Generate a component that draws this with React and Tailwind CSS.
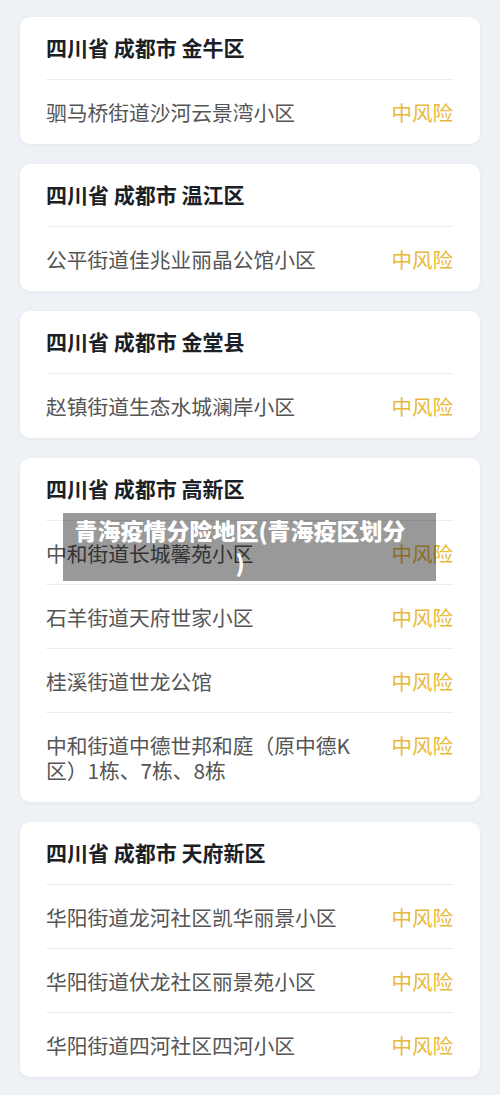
import React from "react";

const groups = [
  { title: "四川省 成都市 金牛区", rows: ["驷马桥街道沙河云景湾小区"] },
  { title: "四川省 成都市 温江区", rows: ["公平街道佳兆业丽晶公馆小区"] },
  { title: "四川省 成都市 金堂县", rows: ["赵镇街道生态水城澜岸小区"] },
  {
    title: "四川省 成都市 高新区",
    rows: [
      "中和街道长城馨苑小区",
      "石羊街道天府世家小区",
      "桂溪街道世龙公馆",
      "中和街道中德世邦和庭（原中德K区）1栋、7栋、8栋",
    ],
  },
  {
    title: "四川省 成都市 天府新区",
    rows: ["华阳街道龙河社区凯华丽景小区", "华阳街道伏龙社区丽景苑小区", "华阳街道四河社区四河小区"],
  },
];

export default function App() {
  return (
    <div
      className="relative min-h-[1095px] w-[500px] bg-[#eef1f5] pt-[17px] pb-[17px]"
      style={{ fontFamily: '"Noto Sans CJK SC", "Noto Sans", sans-serif' }}
    >
      <div className="flex flex-col gap-[20px] px-[20px]">
        {groups.map((g, i) => (
          <div
            key={i}
            className="rounded-[10px] bg-white pl-[26px] pr-[27px] shadow-[0_1px_4px_rgba(30,40,60,0.05)]"
          >
            <div className="pt-[18px] pb-[19px] text-[21px] leading-[25px] font-bold text-[#1b2026] whitespace-pre">
              {g.title}
            </div>
            {g.rows.map((r, j) => (
              <div
                key={j}
                className="flex items-start gap-[30px] border-t border-[#ededed] pt-[20px] pb-[18px] last:pb-[19px]"
              >
                <div className="flex-1 text-[20.75px] leading-[25px] text-[#555555]">{r}</div>
                <div className="text-[20.5px] leading-[25px] text-[#e8b93a] whitespace-nowrap">中风险</div>
              </div>
            ))}
          </div>
        ))}
      </div>
      <div className="absolute left-[63px] top-[513px] w-[373px] h-[68px] bg-black/40 pl-[11px] pr-[30px] pt-[1px] text-center text-[23px] leading-[32px] font-black text-white whitespace-nowrap">
        <div>青海疫情分险地区(青海疫区划分</div>
        <div>)</div>
      </div>
    </div>
  );
}
